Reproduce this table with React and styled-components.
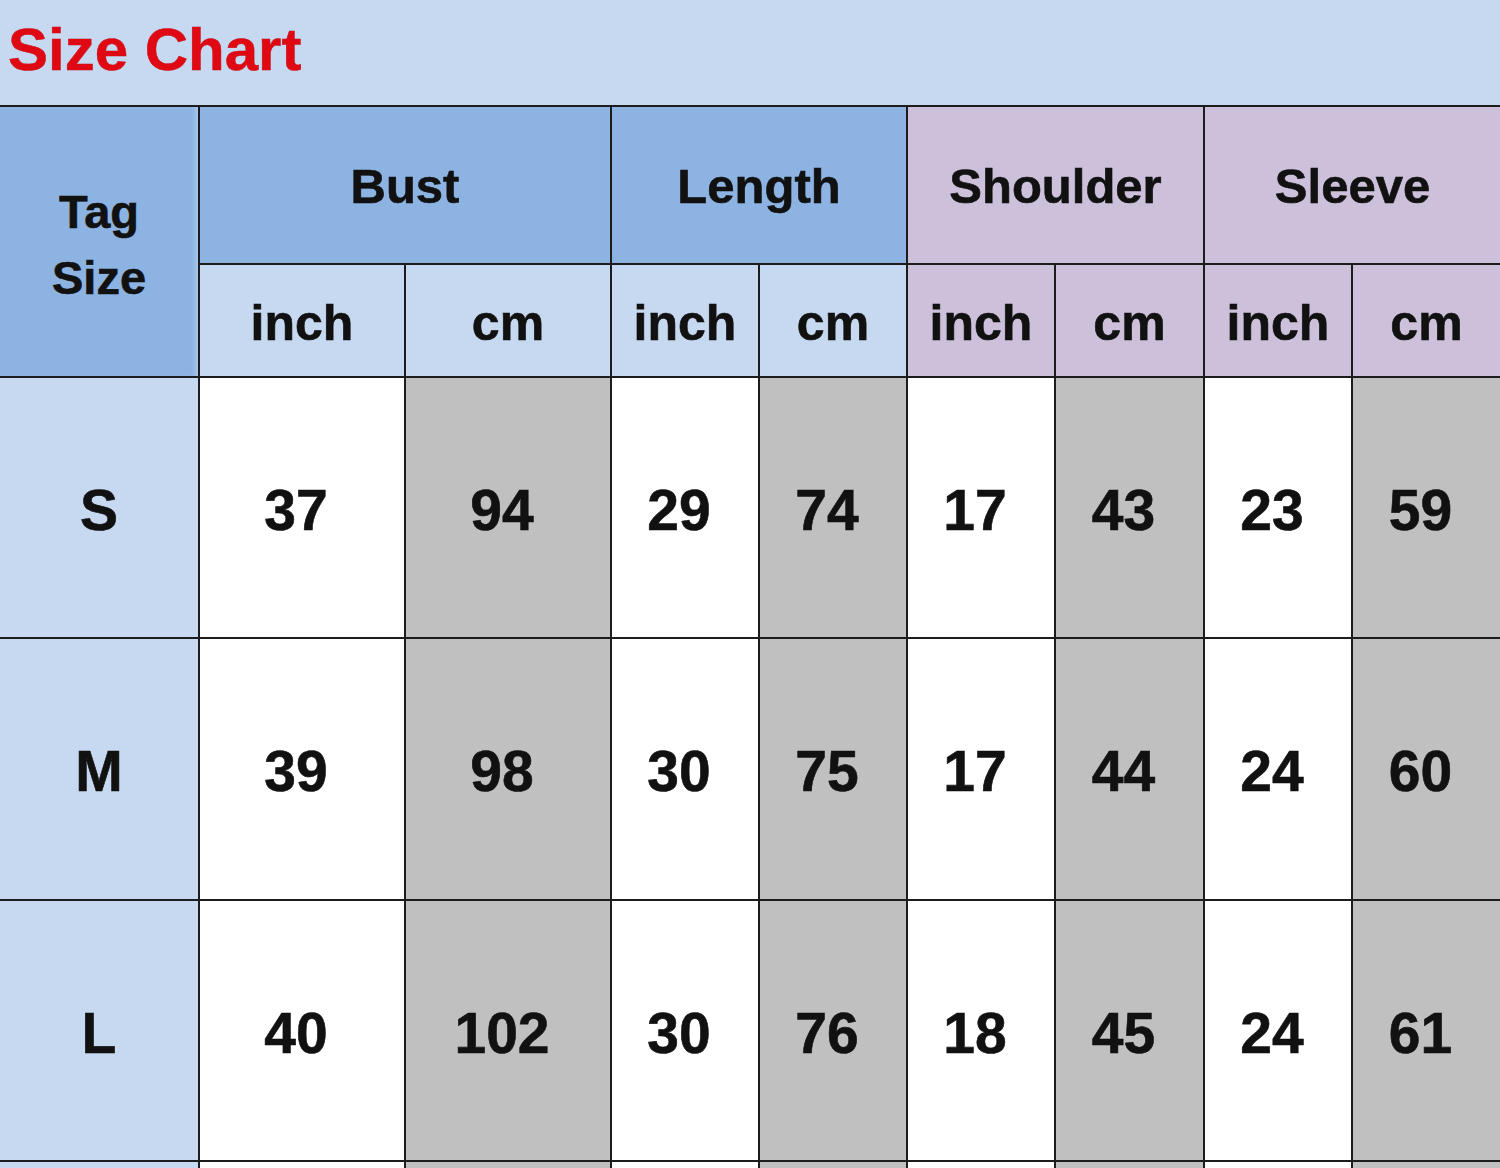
import React from "react";
import styled, { createGlobalStyle } from "styled-components";

const GlobalStyle = createGlobalStyle`
  html, body {
    margin: 0;
    padding: 0;
    background: #ffffff;
    overflow: hidden;
  }
  body {
    font-family: "Liberation Sans", Arial, sans-serif;
  }
`;

const colors = {
  light: "#c6d9f0",
  blue: "#8db3e2",
  purple: "#ccc0da",
  white: "#ffffff",
  gray: "#c0c0c0",
};

const rows = [
  { tag: "S", values: [37, 94, 29, 74, 17, 43, 23, 59] },
  { tag: "M", values: [39, 98, 30, 75, 17, 44, 24, 60] },
  { tag: "L", values: [40, 102, 30, 76, 18, 45, 24, 61] },
  { tag: "", values: ["", "", "", "", "", "", "", ""] },
];

const groups = [
  { name: "Bust", tone: "blue", sub: "light" },
  { name: "Length", tone: "blue", sub: "light" },
  { name: "Shoulder", tone: "purple", sub: "purple" },
  { name: "Sleeve", tone: "purple", sub: "purple" },
];

export default function App() {
  return (
    <Page>
      <GlobalStyle />
      <TitleBar>
        <Title>Size Chart</Title>
      </TitleBar>
      <Grid>
        <TagHead>
          <span>Tag</span>
          <span>Size</span>
        </TagHead>
        {groups.map((g) => (
          <GroupHead key={g.name} $tone={g.tone}>
            {g.name}
          </GroupHead>
        ))}
        {groups.map((g) => (
          <React.Fragment key={g.name + "-sub"}>
            <UnitHead $tone={g.sub}>inch</UnitHead>
            <UnitHead $tone={g.sub}>cm</UnitHead>
          </React.Fragment>
        ))}
        {rows.map((r, i) => (
          <React.Fragment key={i}>
            <RowLabel>{r.tag}</RowLabel>
            {r.values.map((v, j) => (
              <Value key={j} $tone={j % 2 === 0 ? "white" : "gray"}>
                {v}
              </Value>
            ))}
          </React.Fragment>
        ))}
      </Grid>
    </Page>
  );
}

const Page = styled.div`
  width: 1500px;
  height: 1168px;
  overflow: hidden;
`;

const TitleBar = styled.div`
  height: 105px;
  background: ${colors.light};
  display: flex;
  align-items: center;
  padding-left: 8px;
`;

const Title = styled.h1`
  margin: 0;
  margin-top: -6px;
  font-family: "Liberation Sans", Arial, sans-serif;
  font-weight: bold;
  font-size: 60px;
  color: #e00812;
  -webkit-text-stroke: 0.5px #c8101a;
`;

const Grid = styled.div`
  display: grid;
  grid-template-columns: 198px 204px 204px 146px 146px 146px 147px 146px 147px;
  grid-template-rows: 156px 111px 259px 260px 259px 259px;
  gap: 2px;
  padding-top: 2px;
  background: #1c1c1c;
`;

const Cell = styled.div`
  display: flex;
  align-items: center;
  justify-content: center;
  font-weight: bold;
  color: #111;
  -webkit-text-stroke: 0.6px #111;
  background: ${(p) => colors[p.$tone] || colors.light};
`;

const TagHead = styled(Cell)`
  grid-row: span 2;
  flex-direction: column;
  background: ${colors.blue};
  box-shadow: inset -5px 0 4px -2px #a9c6ea;
  font-size: 47px;
  line-height: 66px;
  padding-top: 6px;
`;

const GroupHead = styled(Cell)`
  grid-column: span 2;
  font-size: 49px;
  padding-top: 2px;
`;

const UnitHead = styled(Cell)`
  font-size: 50px;
  padding-top: 4px;
`;

const RowLabel = styled(Cell)`
  background: ${colors.light};
  font-size: 57px;
  padding-top: 4px;
`;

const Value = styled(Cell)`
  font-size: 57px;
  padding-top: 4px;
  padding-right: 12px;
`;
